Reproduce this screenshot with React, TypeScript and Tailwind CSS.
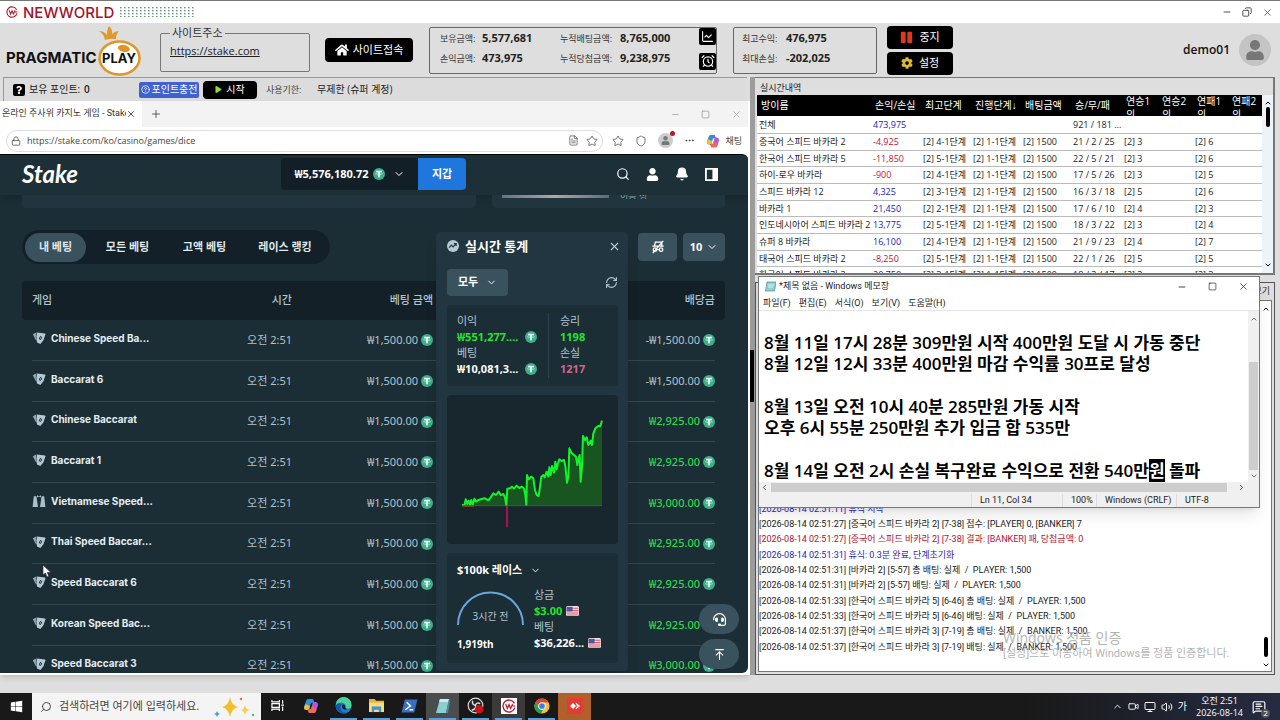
import type { ReactNode } from "react";
import {
  ArrowUpToLine, Bell, ChevronDown, ChevronUp, CircleHelp, Ellipsis, FileText, Lock,
  Minus, Plus, RefreshCw, Search, Shield, Square, Star, Volume2, X, Copy, AlarmClock,
  ChartLine, Monitor, MessageSquareText, Video,
} from "lucide-react";
import { FaHome, FaUser, FaCog, FaPlay, FaPause, FaWindows, FaQuestion, FaHeadset } from "react-icons/fa";

const APP = "font-['Open_Sans','Noto_Sans_CJK_KR',sans-serif]";
const SLIM = "font-['Roboto','Noto_Sans_CJK_KR',sans-serif]";
const KR = "font-['Noto_Sans','Noto_Sans_CJK_KR',sans-serif]";

const live = [
  ["전체", "473,975", "", "", "", "921 / 181 ...", "", ""],
  ["중국어 스피드 바카라 2", "-4,925", "4-1", "1-1", "1500", "21 / 2 / 25", "3", "6"],
  ["한국어 스피드 바카라 5", "-11,850", "5-1", "1-1", "1500", "22 / 5 / 21", "3", "6"],
  ["하이-로우 바카라", "-900", "4-1", "1-1", "1500", "17 / 5 / 26", "3", "5"],
  ["스피드 바카라 12", "4,325", "3-1", "1-1", "1500", "16 / 3 / 18", "5", "6"],
  ["바카라 1", "21,450", "2-1", "1-1", "1500", "17 / 6 / 10", "4", "3"],
  ["인도네시아어 스피드 바카라 2", "13,775", "5-1", "1-1", "1500", "18 / 3 / 22", "3", "4"],
  ["슈퍼 8 바카라", "16,100", "4-1", "1-1", "1500", "21 / 9 / 23", "4", "7"],
  ["태국어 스피드 바카라 2", "-8,250", "5-1", "1-1", "1500", "22 / 1 / 26", "5", "5"],
  ["한국어 스피드 바카라 3", "20,750", "3-1", "1-1", "1500", "18 / 3 / 17", "3", "3"],
];

const logs = [
  ["blue", "[2026-08-14 02:51:11] 휴식 시작"],
  ["", "[2026-08-14 02:51:27] [중국어 스피드 바카라 2] [7-38] 점수: [PLAYER] 0, [BANKER] 7"],
  ["red", "[2026-08-14 02:51:27] [중국어 스피드 바카라 2] [7-38] 결과: [BANKER] 패, 당첨금액: 0"],
  ["blue", "[2026-08-14 02:51:31] 휴식: 0.3분 완료, 단계초기화"],
  ["", "[2026-08-14 02:51:31] [바카라 2] [5-57] 총 배팅: 실제  /  PLAYER: 1,500"],
  ["", "[2026-08-14 02:51:31] [바카라 2] [5-57] 배팅: 실제  /  PLAYER: 1,500"],
  ["", "[2026-08-14 02:51:33] [한국어 스피드 바카라 5] [6-46] 총 배팅: 실제  /  PLAYER: 1,500"],
  ["", "[2026-08-14 02:51:33] [한국어 스피드 바카라 5] [6-46] 배팅: 실제  /  PLAYER: 1,500"],
  ["", "[2026-08-14 02:51:37] [한국어 스피드 바카라 3] [7-19] 총 배팅: 실제  /  BANKER: 1,500"],
  ["", "[2026-08-14 02:51:37] [한국어 스피드 바카라 3] [7-19] 배팅: 실제  /  BANKER: 1,500"],
];

const bets = [
  ["Chinese Speed Ba...", "-₩1,500.00"],
  ["Baccarat 6", "-₩1,500.00"],
  ["Chinese Baccarat", "₩2,925.00"],
  ["Baccarat 1", "₩2,925.00"],
  ["Vietnamese Speed...", "₩3,000.00"],
  ["Thai Speed Baccar...", "₩2,925.00"],
  ["Speed Baccarat 6", "₩2,925.00"],
  ["Korean Speed Bac...", "₩2,925.00"],
  ["Speed Baccarat 3", "₩3,000.00"],
];

const profitLine =
  "126,376 134,374 137,358 142,372 146,362 150,374 154,360 158,374 163,356 168,365 175,360 185,357 195,355 205,361 212,352 220,340 228,345 236,335 242,345 250,342 255,352 259,376 262,326 270,325 276,320 282,326 290,317 298,324 306,320 312,326 316,345 319,375 321,285 326,298 334,290 340,295 345,330 350,345 356,348 360,320 364,290 370,285 374,292 380,275 385,290 388,262 392,285 396,258 402,278 406,245 410,268 414,250 418,238 425,243 432,240 436,258 441,308 445,290 448,205 454,218 462,225 468,230 472,255 476,235 479,225 482,305 486,260 489,168 495,180 500,172 505,195 512,182 516,195 520,160 526,145 535,138 541,138 546,122";

function Tether() {
  return (
    <svg viewBox="0 0 24 24" className="size-3 shrink-0">
      <circle cx="12" cy="12" r="12" fill="#3fae8a" />
      <path d="M6 5.5h12v3.2h-4.3v10h-3.4v-10H6z" fill="#e9fff8" />
      <ellipse cx="12" cy="11.5" rx="7" ry="1.8" fill="none" stroke="#e9fff8" strokeWidth="0.9" />
    </svg>
  );
}

function UsFlag() {
  return (
    <svg viewBox="0 0 13 10" className="h-[10px] w-[13px] shrink-0">
      <rect width="13" height="10" rx="1.5" fill="#f1e4e6" />
      <path d="M.5 2.2h12M.5 4.6h12M.5 7h12M.8 9h11.4" stroke="#d8586c" strokeWidth="1.1" />
      <rect x=".6" y=".8" width="6" height="4.6" fill="#4a5a9c" />
    </svg>
  );
}

function Cards() {
  return (
    <svg viewBox="0 0 14 14" className="size-[14px] shrink-0">
      <path d="M.8 3.2 4.6 1.2 3.8 6 5 9.4 3.6 8.8z" fill="#8fa9b4" />
      <path d="M5.2 1.6 12.8 2.4q.7.1.6.8L11.6 9 8.4 13 5 11.6 4.4 5.6z" fill="#b4cad4" />
      <path d="M8.800 4.700 10.300 7 8 9.200 6.900 7z" fill="#1b2d35" />
      <circle cx="8.600" cy="7" r=".7" fill="#b4cad4" />
    </svg>
  );
}

function Vest() {
  return (
    <svg viewBox="0 0 14 14" className="size-[14px] shrink-0" fill="#a9c0ca">
      <path d="M1.8 2.2h2.6L6 13H.6zM9.6 2.2h2.6L13.4 13H8z" />
      <path d="m5 1.2 2 1 2-1v2.4l-2-1-2 1z" />
    </svg>
  );
}

function NwMark({ className }: { className: string }) {
  return (
    <svg viewBox="0 0 14 14" className={className} fill="none" stroke="#b3182f">
      <path d="M12.4 4.4A6 6 0 1 0 12.8 8.6" strokeWidth="1.3" />
      <path d="m3.6 5 1.8 4.4L7 5.6l1.6 3.8L10.6 5M10 7h3.4" strokeWidth="1.2" />
    </svg>
  );
}

function TitleBar() {
  return (
    <header className="flex h-[23px] shrink-0 items-center border-t border-[#777] bg-white pr-[7px] pl-[6px]">
      <NwMark className="size-3" />
      <span className="ml-[5px] font-['Inter',sans-serif] text-[15px] leading-none font-medium text-[#a3132c]">NEWWORLD</span>
      <svg viewBox="0 0 75 10" className="ml-[6px] h-[10px] w-[75px]">
        <defs>
          <pattern id="dots" width="4" height="3" patternUnits="userSpaceOnUse">
            <rect width="1.6" height="1.4" fill="#6c9a78" />
          </pattern>
        </defs>
        <rect width="75" height="10" fill="url(#dots)" />
      </svg>
      <div className="ml-auto flex items-center gap-[10px] text-[#333]">
        <button aria-label="최소화"><Minus size={10} strokeWidth={2} /></button>
        <button aria-label="이전 크기로"><Copy size={10} strokeWidth={2} className="-scale-x-100" /></button>
        <button aria-label="닫기"><X size={11} strokeWidth={1.5} /></button>
      </div>
    </header>
  );
}

function PragmaticLogo() {
  return (
    <svg viewBox="0 0 144 54" className="h-[54px] w-[144px] shrink-0" role="img" aria-label="Pragmatic Play">
      <path d="M105 17q-1-6-6-9 5 0 8 4 0-6 2-9 4 4 3 8 3-3 7-3-3 3-3 8-5-1-11 1z" fill="#e09a2b" />
      <ellipse cx="119.500" cy="35" rx="20" ry="16.500" fill="#fff" stroke="#e0952a" strokeWidth="2.500" />
      <ellipse cx="124" cy="25.500" rx="6" ry="3.500" fill="#e0952a" transform="rotate(12 124 25)" />
      <text x="6" y="40" className="font-['Inter',sans-serif] text-[15px] font-bold" fill="#111">PRAGMATIC</text>
      <text x="102" y="40" className="font-['Inter',sans-serif] text-[13px] font-bold" fill="#111">PLAY</text>
    </svg>
  );
}

function Stat({ label, value, labelClass }: { label: string; value: string; labelClass: string }) {
  return (
    <div className="flex h-5 items-center">
      <dt className={`text-[9px] text-[#333] ${labelClass}`}>{label}</dt>
      <dd className="text-[11px] font-bold text-[#222]">{value}</dd>
    </div>
  );
}

function BlackButton({ children, className, label }: { children: ReactNode; className: string; label?: string }) {
  return <button aria-label={label} className={`flex items-center justify-center rounded bg-black text-white ${className}`}>{children}</button>;
}

function Header() {
  return (
    <section className={`flex h-[54px] shrink-0 items-center bg-[#dedede] pr-[9px] ${APP}`}>
      <PragmaticLogo />
      <fieldset className="mb-[2px] ml-4 h-[46px] w-[150px] rounded-xs border border-[#777] px-[9px]">
        <legend className="px-0.5 text-[11px] leading-[14px] text-[#333]">사이트주소</legend>
        <a href="https://stake.com" className="block text-[11px] leading-[22px] text-[#222] underline">https://stake.com</a>
      </fieldset>
      <BlackButton className="ml-[15px] h-6 w-[88px] gap-1 text-[11px]"><FaHome size={14} />사이트접속</BlackButton>
      <dl className="ml-4 flex h-[47px] w-[288px] items-center rounded-xs border border-[#666] pb-[3px] pl-[10px]">
        <div className="w-[120px]">
          <Stat label="보유금액:" value="5,577,681" labelClass="w-[42px]" />
          <Stat label="손익금액:" value="473,975" labelClass="w-[42px]" />
        </div>
        <div className="flex-1">
          <Stat label="누적배팅금액:" value="8,765,000" labelClass="w-[60px]" />
          <Stat label="누적당첨금액:" value="9,238,975" labelClass="w-[60px]" />
        </div>
        <div className="flex flex-col gap-2">
          <BlackButton label="차트" className="size-[17px] !rounded-xs"><ChartLine size={13} /></BlackButton>
          <BlackButton label="알람" className="size-[17px] !rounded-xs"><AlarmClock size={14} /></BlackButton>
        </div>
      </dl>
      <dl className="ml-4 h-[47px] w-36 rounded-xs border border-[#666] py-[1px] pl-2">
        <Stat label="최고수익:" value="476,975" labelClass="w-[44px]" />
        <Stat label="최대손실:" value="-202,025" labelClass="w-[44px]" />
      </dl>
      <div className="ml-[10px] flex flex-col gap-[3px]">
        <BlackButton className="h-[23px] w-[66px] gap-[6px] text-[11px]"><FaPause size={13} color="#d83c1c" />중지</BlackButton>
        <BlackButton className="h-[23px] w-[66px] gap-[6px] text-[11px]"><FaCog size={12} color="#e0b92e" />설정</BlackButton>
      </div>
      <span className="ml-auto text-[12px] font-semibold text-[#111]">demo01</span>
      <span className="ml-[9px] flex size-8 items-center justify-center rounded-full bg-[#c4c4c4] text-[#777]"><FaUser size={20} /></span>
    </section>
  );
}

function PointBar() {
  return (
    <div className={`mr-[3px] ml-[3px] flex h-6 shrink-0 items-center border-t border-l border-[#999] bg-[#dcdcdc] pl-[9px] text-[10px] text-[#222] ${APP}`}>
      <span className="flex size-3 items-center justify-center rounded-xs bg-black text-white"><FaQuestion size={8} /></span>
      <span className="ml-1 w-[55px]">보유 포인트:</span>
      <b className="w-[55px] font-semibold">0</b>
      <button className="flex h-4 w-[60px] items-center justify-center gap-0.5 rounded-xs bg-[#3f62cf] text-white"><CircleHelp size={9} />포인트충전</button>
      <BlackButton className="ml-1 h-[18px] w-[54px] gap-1"><FaPlay size={7} color="#8be03c" />시작</BlackButton>
      <span className="ml-[9px] w-[51px] text-[9px] text-[#444]">사용기한:</span>
      <span>무제한 (슈퍼 계정)</span>
    </div>
  );
}

function BrowserChrome() {
  return (
    <>
      <div className={`flex h-[26px] shrink-0 items-center bg-[#f3f3f3] text-[#333] ${SLIM}`}>
        <div className="flex h-full w-[142px] items-center bg-white pl-[2px]">
          <span className="w-[124px] overflow-hidden text-[9px] whitespace-nowrap">온라인 주사위 카지노 게임 - Stake</span>
          <button aria-label="탭 닫기"><X size={10} /></button>
        </div>
        <button aria-label="새 탭" className="ml-2"><Plus size={12} strokeWidth={1.5} /></button>
        <div className="ml-auto flex gap-[21px] pr-[6px] text-[#999]">
          <button aria-label="최소화"><Minus size={9} /></button>
          <button aria-label="최대화"><Square size={9} /></button>
          <button aria-label="닫기"><X size={11} strokeWidth={1.5} /></button>
        </div>
      </div>
      <div className={`flex h-[27px] shrink-0 items-center bg-white pr-[6px] pl-[6px] text-[#444] ${APP}`}>
        <div className="flex h-[22px] min-w-0 flex-1 items-center rounded-full border border-[#ddd] px-[4px]">
          <Lock size={10} strokeWidth={1.8} />
          <input aria-label="주소" defaultValue="https://stake.com/ko/casino/games/dice" className="ml-[6px] min-w-0 flex-1 bg-transparent text-[9px] outline-none" />
          <FileText size={11} strokeWidth={1.5} />
          <Star size={12} strokeWidth={1.5} className="ml-[7px]" />
        </div>
        <div className="ml-[9px] flex items-center gap-[11px]">
          <Star size={12} strokeWidth={1.5} />
          <Shield size={12} strokeWidth={1.5} />
          <span className="relative flex size-[15px] items-center justify-center rounded-full bg-[#ccc] text-[#777]">
            <FaUser size={9} />
            <i className="absolute -top-0.5 -right-0.5 size-[5px] rounded-full bg-[#b3182f]" />
          </span>
          <Ellipsis size={11} />
          <button className="flex items-center gap-[5px] text-[9px]"><Copilot className="size-[14px]" />채팅</button>
        </div>
      </div>
    </>
  );
}

function Copilot({ className }: { className: string }) {
  return (
    <svg viewBox="0 0 16 16" className={className}>
      <path d="M5 1h5l1.500 3.500L8 5 6 12H3.500Q1 12 1 9l2-6q.6-2 2-2z" fill="#2f8fdc" />
      <path d="M2.500 6 1 9.500Q1 12 3.500 12H6l1-4z" fill="#e6c13b" />
      <path d="M11 15H6l-1.500-3.500L8 11l2-7h2.500Q15 4 15 7l-2 6q-.6 2-2 2z" fill="#b957d8" />
      <path d="M11 15H6l-1.500-3.500L8 11l1-3 4.600 3.500L13 13q-.6 2-2 2z" fill="#ee6a55" />
    </svg>
  );
}

function StakeHeader() {
  return (
    <div className="flex h-10 shrink-0 items-center bg-[#1d3038] pr-[30px] pb-[2px] pl-[22px] text-white shadow-md">
      <span className="w-[259px] font-['Lato',sans-serif] text-[24px] leading-none font-bold italic">Stake</span>
      <button className="flex h-8 w-[137px] items-center justify-center gap-1 rounded-l bg-[#131f26] text-[11px] font-bold">
        ₩5,576,180.72 <Tether /><ChevronDown size={12} className="ml-1" />
      </button>
      <button className="h-8 w-12 rounded-r bg-[#1f76dc] text-[11px] font-bold">지갑</button>
      <div className="ml-auto flex items-center gap-4">
        <button aria-label="검색"><Search size={14} /></button>
        <button aria-label="계정"><FaUser size={13} /></button>
        <button aria-label="알림"><Bell size={14} fill="white" /></button>
        <button aria-label="패널">
          <svg viewBox="0 0 14 14" className="size-[13px]"><path d="M1 1h12v12H1z" fill="none" stroke="white" strokeWidth="2" /><path d="M8 1h5v12H8z" fill="white" /></svg>
        </button>
      </div>
    </div>
  );
}

function BetTable() {
  return (
    <table className="mx-[10px] mt-[17px] w-[calc(100%-20px)] table-fixed border-separate border-spacing-0 text-[11px] text-[#b1c3cd]">
      <colgroup>
        <col className="w-[130px]" /><col className="w-[130px]" /><col className="w-[141px]" /><col />
      </colgroup>
      <thead>
        <tr className="h-[39px]">
          <th className="rounded-l bg-[#142027] text-left font-medium shadow-[-10px_0_0_#142027]">게임</th>
          <th className="bg-[#142027] text-right font-medium">시간</th>
          <th className="bg-[#142027] text-right font-medium">베팅 금액</th>
          <th className="rounded-r bg-[#142027] text-right font-medium shadow-[10px_0_0_#142027]">배당금</th>
        </tr>
      </thead>
      <tbody>
        {bets.map(([game, pay], i) => (
          <tr key={i} className="h-[41px] nth-[3n]:h-10 [&>td]:border-b [&>td]:border-[#33474f]">
            <td className="pb-1">
              <span className="flex items-center gap-[5px] font-['Inter',sans-serif] text-[10px] font-bold whitespace-nowrap text-[#e6eef2]">
                {i === 4 ? <Vest /> : <Cards />}{game}
              </span>
            </td>
            <td className="text-right">오전 2:51</td>
            <td><span className="flex items-center justify-end gap-[3px]">₩1,500.00 <Tether /></span></td>
            <td className={pay.startsWith("-") ? "" : "font-medium text-[#2fd84e]"}>
              <span className="flex items-center justify-end gap-[3px]">{pay} <Tether /></span>
            </td>
          </tr>
        ))}
      </tbody>
    </table>
  );
}

function LiveStats() {
  return (
    <aside className="absolute top-[37px] left-[436px] flex w-[192px] flex-col rounded bg-[#213640] pr-[10px] pb-2 pl-[11px] text-white shadow-lg">
      <div className="flex h-7 items-center">
        <svg viewBox="0 0 14 14" className="size-3">
          <circle cx="7" cy="7" r="7" fill="#b4cad4" />
          <path d="m2.500 9 2.500-3 2 2 3.500-3.500M8 4.300h2.700V7" fill="none" stroke="#213640" strokeWidth="1.400" />
        </svg>
        <h2 className="ml-[6px] text-[13px] leading-5 font-bold">실시간 통계</h2>
        <button aria-label="닫기" className="-mr-[3px] ml-auto text-[#b4cad4]"><X size={13} /></button>
      </div>
      <div className="mt-[9px] flex h-[27px] items-center justify-between">
        <button className="flex h-full w-[61px] items-center justify-center gap-2 rounded bg-[#3a525e] text-[11px] font-bold">모두<ChevronDown size={11} /></button>
        <button aria-label="새로 고침" className="text-[#b4cad4]"><RefreshCw size={13} /></button>
      </div>
      <div className="mt-[9px] flex h-[81px] rounded bg-[#1b2d35] py-2 pl-[10px] text-[11px] leading-4">
        <div className="w-[92px] border-r border-[#2c424d]">
          <p className="text-[#b1c3cd]">이익</p>
          <p className="flex items-center justify-between pr-[11px] font-bold text-[#24e52c]">₩551,277.... <Tether /></p>
          <p className="text-[#b1c3cd]">베팅</p>
          <p className="flex items-center justify-between pr-[11px] font-bold">₩10,081,3... <Tether /></p>
        </div>
        <div className="pl-[11px]">
          <p className="text-[#b1c3cd]">승리</p>
          <p className="font-bold text-[#24e52c]">1198</p>
          <p className="text-[#b1c3cd]">손실</p>
          <p className="font-bold text-[#d0668c]">1217</p>
        </div>
      </div>
      <svg viewBox="81 45 513 447" className="mt-[9px] h-[149px] w-full rounded bg-[#18272e]" preserveAspectRatio="none">
        <polygon points={`${profitLine} 546,377 126,377`} fill="#185520" />
        <polyline points={profitLine} fill="none" stroke="#12f52c" strokeWidth="6" strokeLinejoin="round" />
        <path d="M126 377h420" stroke="#4c6a55" strokeWidth="2" />
        <path d="M128 378h34" stroke="#b03a2c" strokeWidth="4" />
        <path d="M261 378v64" stroke="#c01450" strokeWidth="5" />
      </svg>
      <div className="mt-[9px] h-[110px] rounded bg-[#1b2d35] px-[10px] pt-[9px] text-[11px] leading-4">
        <button className="flex items-center gap-2 font-bold">$100k 레이스 <ChevronDown size={11} /></button>
        <div className="mt-[9px] flex">
          <div className="w-[77px]">
            <div className="relative h-[42px] w-[67px] text-center text-[10px] text-[#b1c3cd]">
              <svg viewBox="0 0 67 34" className="absolute inset-x-0 top-1 h-[34px]">
                <path d="M1 34a32.500 32.500 0 0 1 65 0" fill="none" stroke="#6ba6e0" strokeWidth="2" />
              </svg>
              <span className="absolute inset-x-0 top-[21px]">3시간 전</span>
            </div>
            <p className="mt-[7px] text-[10px] font-bold">1,919th</p>
          </div>
          <div>
            <p className="text-[#b1c3cd]">상금</p>
            <p className="flex items-center gap-1 font-bold text-[#24e52c]">$3.00 <UsFlag /></p>
            <p className="text-[#b1c3cd]">베팅</p>
            <p className="flex items-center gap-1 font-bold">$36,226... <UsFlag /></p>
          </div>
        </div>
      </div>
    </aside>
  );
}

function StakePage() {
  return (
    <div className={`flex min-h-0 flex-1 flex-col overflow-hidden rounded-tr-md rounded-br-md border-t border-black bg-[#1b2d35] ${KR}`}>
      <StakeHeader />
      <div className="relative min-h-0 flex-1 overflow-hidden pr-[23px] pl-[22px]">
        <div className="flex h-[13px] gap-4">
          <div className="w-[454px] rounded-b bg-[#20353e]" />
          <div className="flex flex-1 gap-[11px] overflow-hidden rounded-b bg-[#20353e] pl-[10px]">
            <span className="h-[3px] w-[107px] bg-linear-to-r from-[#60777f] via-[#b9a3a8] to-[#54707a]" />
            <span className="h-1 overflow-hidden text-[9px] leading-[2px] text-[#8ea3ad]">이름 정</span>
          </div>
        </div>
        <div className="mt-[22px] flex items-center">
          <div role="tablist" className="flex h-[34px] w-[308px] items-center rounded-full bg-[#142027] pl-[3px] text-[11px] font-bold text-[#dfe9ee]">
            <button role="tab" aria-selected="true" className="h-[29px] w-[61px] rounded-full bg-[#3a525e]">내 베팅</button>
            <button role="tab" className="w-[83px]">모든 베팅</button>
            <button role="tab" className="w-[71px]">고액 베팅</button>
            <button role="tab" className="flex-1">레이스 랭킹</button>
          </div>
          <div className="ml-auto flex gap-[6px] text-white">
            <button aria-label="익명 모드" className="flex h-7 w-[39px] items-center justify-center rounded bg-[#3a525e]">
              <svg viewBox="0 0 16 16" className="size-[14px]" fill="none" stroke="white" strokeWidth="1.500">
                <path d="M4 6.500 5 2.500h7l.5 4M1.500 7h13M14 1 2 15M6.500 11h3" />
                <circle cx="4.500" cy="11" r="2" /><circle cx="11.500" cy="11" r="2" />
              </svg>
            </button>
            <button className="flex h-7 w-[42px] items-center justify-center gap-1 rounded bg-[#3a525e] text-[11px] font-bold">10<ChevronDown size={12} /></button>
          </div>
        </div>
        <BetTable />
        <LiveStats />
        <div className="absolute right-[9px] bottom-1 flex flex-col gap-[5px] text-white">
          <button aria-label="고객 지원" className="flex h-[30px] w-10 items-center justify-center rounded-full bg-[#3a525e]"><FaHeadset size={13} /></button>
          <button aria-label="맨 위로" className="flex h-[30px] w-10 items-center justify-center rounded-full bg-[#3a525e]"><ArrowUpToLine size={13} /></button>
        </div>
        <svg viewBox="0 0 10 14" className="absolute top-[369px] left-[42px] h-[14px] w-[10px]">
          <path d="M1 1v10l2.300-2 1.800 4 1.800-.8L5.200 8.500H9z" fill="white" stroke="#222" strokeWidth=".6" />
        </svg>
      </div>
    </div>
  );
}

const liveHeads = ["방이름", "손익/손실", "최고단계", "진행단계", "배팅금액", "승/무/패", "연승1", "연승2", "연패1", "연패2"];

function LiveTable() {
  return (
    <section className={`flex h-[198px] shrink-0 flex-col border-t border-r-2 border-b-2 border-[#777] bg-[#dedede] ${APP}`}>
      <h2 className="h-[17px] shrink-0 pl-[5px] text-[9px] leading-[19px] text-[#222]">실시간내역</h2>
      <div className="ml-[2px] flex min-h-0 flex-1 bg-white">
        <div className="min-w-0 flex-1 overflow-hidden">
          <table className="w-full table-fixed border-collapse text-[9px] whitespace-nowrap text-[#222]">
            <colgroup>
              <col className="w-[114px]" /><col className="w-[50px]" /><col className="w-[50px]" /><col className="w-[50px]" /><col className="w-[50px]" />
              <col className="w-[51px]" /><col className="w-9" /><col className="w-[35px]" /><col className="w-[35px]" /><col />
            </colgroup>
            <thead className="bg-black text-white">
              <tr className="h-[21px]">
                {liveHeads.map((h, i) => (
                  <th key={h} className="p-0 pl-1 text-left font-normal">
                    <div className="h-[21px] overflow-hidden text-[10px] leading-[21px]">
                      {i > 5 ? <span className="block leading-[13px]">{h}<br />의</span> : h}
                      {i === 3 && <span className="font-['Liberation_Sans',sans-serif]">↓</span>}
                    </div>
                  </th>
                ))}
              </tr>
            </thead>
            <tbody>
              {live.map((r, i) => (
                <tr key={i} className="h-[17px] border-b border-[#bbb] nth-[3n]:h-4 [&>td]:p-0 [&>td]:pl-[2px] [&>td]:leading-[15px]">
                  <td>{r[0]}</td>
                  <td className={r[1].startsWith("-") ? "text-[#c41236]" : "text-[#2218b8]"}>{r[1]}</td>
                  <td>{r[2] && `[2] ${r[2]}단계`}</td>
                  <td>{r[3] && `[2] ${r[3]}단계`}</td>
                  <td>{r[4] && `[2] ${r[4]}`}</td>
                  <td>{r[5]}</td>
                  <td>{r[6] && `[2] ${r[6]}`}</td>
                  <td />
                  <td>{r[7] && `[2] ${r[7]}`}</td>
                  <td />
                </tr>
              ))}
            </tbody>
          </table>
        </div>
        <div className="flex w-[11px] flex-col items-center bg-[#eef3fa] pt-1">
          <ChevronUp size={8} strokeWidth={3} />
          <i className="h-5 w-1 rounded bg-black" />
          <ChevronDown size={8} strokeWidth={3} className="mt-auto mb-1" />
        </div>
      </div>
    </section>
  );
}

function LogPanel() {
  return (
    <section className={`relative mt-[7px] flex min-h-0 flex-1 flex-col border border-[#555] bg-[#dedede] ${SLIM}`}>
      <div className="flex h-[17px] shrink-0 items-center justify-end pr-1 text-[9px] text-[#333]"><button>보기</button></div>
      <div className="mx-[2px] mb-[2px] flex min-h-0 flex-1 border border-[#777] bg-white">
        <div className="flex min-w-0 flex-1 flex-col justify-end overflow-hidden pb-4 text-[9px] whitespace-pre">
          {logs.map(([tone, line], i) => (
            <p key={i} className={`h-[15px] shrink-0 leading-[15px] nth-[3n]:h-4 ${tone === "blue" ? "text-[#2b1fb0]" : tone === "red" ? "text-[#b31230]" : "text-[#222]"}`}>{line}</p>
          ))}
        </div>
        <div className="flex w-[11px] flex-col items-center pt-1">
          <ChevronUp size={8} strokeWidth={3} />
          <i className="mt-auto h-5 w-1 rounded bg-black" />
          <ChevronDown size={8} strokeWidth={3} className="mt-1 mb-0.5" />
        </div>
      </div>
      <div className={`absolute bottom-[12px] left-[247px] whitespace-nowrap text-[#b4b4b4] ${APP}`}>
        <p className="text-[14px] leading-4">Windows 정품 인증</p>
        <p className={`text-[11px] leading-4 ${SLIM}`}>[설정]으로 이동하여 Windows를 정품 인증합니다.</p>
      </div>
    </section>
  );
}

function Notepad() {
  return (
    <section className={`absolute top-[199px] left-[3px] flex h-[232px] w-[502px] flex-col border border-[#777] bg-white text-[#222] shadow-lg ${SLIM}`}>
      <div className="flex h-[19px] shrink-0 items-center pr-[10px] pl-[6px] text-[9px]">
        <svg viewBox="0 0 11 11" className="size-[11px]"><path d="M2 1h9L9.500 10H.5z" fill="#8ed0cf" stroke="#4d8c8c" strokeWidth=".7" /><path d="M3 4h6M3 6h5" stroke="#e8ffff" strokeWidth=".8" /></svg>
        <span className="ml-[3px]">*제목 없음 - Windows 메모장</span>
        <div className="ml-auto flex gap-[21px]">
          <button aria-label="최소화"><Minus size={10} /></button>
          <button aria-label="최대화"><Square size={9} strokeWidth={1.8} /></button>
          <button aria-label="닫기"><X size={11} strokeWidth={1.6} /></button>
        </div>
      </div>
      <nav className="flex h-[15px] shrink-0 items-center gap-2 border-b border-[#e4e4e4] pl-1 text-[9px] leading-none">
        <button>파일(F)</button><button>편집(E)</button><button>서식(O)</button><button>보기(V)</button><button>도움말(H)</button>
      </nav>
      <div className="flex min-h-0 flex-1">
        <div role="textbox" aria-multiline="true" aria-label="메모" tabIndex={0} className={`min-w-0 flex-1 overflow-hidden pl-[5px] text-[17px] leading-[21px] font-semibold whitespace-pre text-black [&>p]:h-[21px] [&>p]:nth-[3n]:h-[22px] ${APP}`}>
          <p>&nbsp;</p>
          <p>8월 11일 17시 28분 309만원 시작 400만원 도달 시 가동 중단</p>
          <p>8월 12일 12시 33분 400만원 마감 수익률 30프로 달성</p>
          <p>&nbsp;</p>
          <p>8월 13일 오전 10시 40분 285만원 가동 시작</p>
          <p>오후 6시 55분 250만원 추가 입금 합 535만</p>
          <p>&nbsp;</p>
          <p>8월 14일 오전 2시 손실 복구완료 수익으로 전환 540만<mark className="bg-black text-white">원</mark> 돌파</p>
        </div>
        <div className="flex w-[11px] flex-col items-center bg-[#f0f0f0]">
          <ChevronUp size={8} className="mt-1" />
          <i className="mt-auto h-[108px] w-[9px] bg-[#cdcdcd]" />
          <ChevronDown size={8} className="my-0.5" />
        </div>
      </div>
      <div className="flex h-[11px] shrink-0 items-center bg-[#f0f0f0] pr-[13px] pl-[1px]">
        <ChevronDown size={9} className="rotate-90" />
        <i className="ml-[2px] h-[9px] w-[456px] bg-[#cdcdcd]" />
        <ChevronDown size={9} className="ml-auto -rotate-90" />
      </div>
      <div className="flex h-[14px] shrink-0 items-center justify-end bg-[#f0f0f0] text-[9px] leading-[13px] [&>span]:border-l [&>span]:border-[#ddd] [&>span]:pl-2">
        <span className="w-[91px]">Ln 11, Col 34</span>
        <span className="w-[34px]">100%</span>
        <span className="w-[80px]">Windows (CRLF)</span>
        <span className="w-[83px]">UTF-8</span>
      </div>
    </section>
  );
}

function Task({ children, label, open = true, tint = "" }: { children: ReactNode; label: string; open?: boolean; tint?: string }) {
  return (
    <button aria-label={label} className={`flex h-full w-[33px] flex-col items-center ${tint}`}>
      <span className="flex flex-1 items-center">{children}</span>
      <i className={`h-0.5 w-[27px] ${open ? "bg-[#5a9fd8]" : "bg-transparent"}`} />
    </button>
  );
}

function Taskbar() {
  return (
    <footer className={`flex h-[27px] shrink-0 items-center bg-linear-to-r from-[#191919] from-80% to-[#262b42] pr-[14px] text-white ${APP}`}>
      <button aria-label="시작" className="flex w-8 justify-center"><FaWindows size={13} /></button>
      <label className="flex h-full w-[229px] items-center bg-[#f4f4f4] pr-[6px] pl-2 text-[#333]">
        <Search size={12} strokeWidth={1.8} className="-scale-x-100" />
        <input aria-label="검색" placeholder="검색하려면 여기에 입력하세요." className="ml-[7px] min-w-0 flex-1 bg-transparent text-[11px] outline-none placeholder:text-[#444]" />
        <svg viewBox="0 0 42 22" className="h-[22px] w-[42px]">
          <path d="M17 1q1.500 8.500 8 10-6.500 1.500-8 10-1.500-8.500-8-10 6.500-1.500 8-10z" fill="#f2bf2c" />
          <path d="M32 9q.8 4 4 5-3.200 1-4 5-.8-4-4-5 3.200-1 4-5z" fill="#f5cf4e" />
          <path d="M4 15q.5 2.500 3 3-2.500.5-3 3-.5-2.500-3-3 2.500-.5 3-3z" fill="#3aa6dd" />
          <circle cx="28" cy="3" r="1.300" fill="#d77b46" /><circle cx="40" cy="19" r="1.200" fill="#58b06a" />
        </svg>
      </label>
      <Task label="작업 보기" open={false}>
        <svg viewBox="0 0 14 14" className="size-[13px]" fill="none" stroke="white" strokeWidth="1.300"><path d="M1 1v2h8V1M1 13v-2h8v2M1 5h8v4H1zM12.500 1v4M12.500 8v5M11 6.500h3" /></svg>
      </Task>
      <Task label="Copilot" open={false}><Copilot className="size-4" /></Task>
      <Task label="Edge">
        <svg viewBox="0 0 18 18" className="size-[17px]">
          <circle cx="9" cy="9" r="8.500" fill="#1a7fd0" />
          <path d="M1 7A8.300 8.300 0 0 1 17.500 8.500q0 4-4.200 4-3 0-2.300-2Q12 7 8 6 3.500 5.500 1 9z" fill="#4cd39a" />
          <path d="M7 8q-3 4 1 7.500 3 2 6.500 0Q11 19 6 17-.5 13 1.500 8 4 5 7 8z" fill="#1558a8" />
          <path d="M8 8q3-.5 3 2-1 2.500 2.500 2.500-1 1-3 .8Q6.500 12.500 8 8z" fill="#191919" />
        </svg>
      </Task>
      <Task label="파일 탐색기">
        <svg viewBox="0 0 18 16" className="h-[15px] w-[17px]"><path d="M1 1h6l1.500 2H17v12H1z" fill="#e9b53b" /><path d="M1 5h16v10H1z" fill="#fbdc7c" /><path d="M4 15V9h10v6h-2.500v-2.500h-5V15z" fill="#3b95dc" /></svg>
      </Task>
      <Task label="PowerShell">
        <svg viewBox="0 0 18 15" className="h-[14px] w-[17px]"><path d="M4 .5h13.500L14 14.500H.5z" fill="#3c6fc4" /><path d="m6 3.500 4 4-5.500 4M9 11.500h4" fill="none" stroke="white" strokeWidth="1.500" /></svg>
      </Task>
      <Task label="메모장" tint="bg-[#4a4d4e]">
        <svg viewBox="0 0 16 16" className="size-4"><path d="M5 1h9l-3 14H1z" fill="#8ccfd3" /><path d="M5 1h9l-.7 3H4z" fill="#cdeef0" /><path d="m11 15 3-14 1 2-2 12z" fill="#4b8f95" /></svg>
      </Task>
      <Task label="OBS">
        <svg viewBox="0 0 18 18" className="size-[17px]"><circle cx="9" cy="9" r="7.800" fill="#222" stroke="#ddd" strokeWidth="1.200" /><path d="M9 9q-4-1-3-5M9 9q1-4 5-2M9 9q1 4-4 5" stroke="#ddd" strokeWidth="1.600" fill="none" /><circle cx="13" cy="13" r="4.500" fill="#cc1418" /></svg>
      </Task>
      <Task label="NewWorld" tint="bg-[#3a3a3a]"><span className="flex size-4 items-center justify-center bg-white"><NwMark className="size-[14px]" /></span></Task>
      <Task label="Chrome">
        <svg viewBox="0 0 18 18" className="size-4"><circle cx="9" cy="9" r="8.500" fill="#f3c32f" /><path d="M9 .5A8.500 8.500 0 0 1 16.500 5H9a4 4 0 0 0-3.600 5.500L1.700 4.700A8.500 8.500 0 0 1 9 .5z" fill="#dc4437" /><path d="M1.700 4.700 5.500 11A4 4 0 0 0 10 13l-2 4.500A8.500 8.500 0 0 1 1.700 4.700z" fill="#2f9e50" /><circle cx="9" cy="9" r="4.200" fill="white" /><circle cx="9" cy="9" r="3.200" fill="#3b7ded" /></svg>
      </Task>
      <Task label="AnyDesk" open={false} tint="bg-[#b0602a]">
        <svg viewBox="0 0 16 16" className="size-4"><rect width="16" height="16" fill="#e23c34" /><path d="m6 5 3 3-3 3-3-3z" fill="white" /><path d="m9 5 3.500 3L9 11l1.500-3z" fill="white" stroke="white" strokeWidth=".8" /></svg>
      </Task>
      <div className="ml-auto flex items-center gap-[5px] text-[11px]">
        <ChevronUp size={11} /><Video size={11} /><Monitor size={12} /><Volume2 size={12} />
        <span className="text-[10px]">가</span>
        <time className="ml-1 text-center text-[9px] leading-[12px]">오전 2:51<br />2026-08-14</time>
        <span className="relative ml-1">
          <MessageSquareText size={14} />
          <i className="absolute -right-1 -bottom-1 flex size-[9px] items-center justify-center rounded-full bg-[#555] text-[8px] leading-none not-italic">2</i>
        </span>
      </div>
    </footer>
  );
}

export default function App() {
  return (
    <div className="flex h-screen min-h-0 flex-col overflow-hidden bg-[#dedede]">
      <TitleBar />
      <Header />
      <main className="grid min-h-0 flex-1 grid-cols-[750fr_5px_525fr]">
        <div className="flex min-h-0 min-w-0 flex-col pb-[18px]">
          <PointBar />
          <div className="flex min-h-0 flex-1 flex-col border-r-2 border-b-2 border-white bg-white shadow-md">
            <BrowserChrome />
            <StakePage />
          </div>
        </div>
        <div className="mb-[18px] flex items-center bg-[#9c9c9c]"><i className="h-[52px] w-1 bg-black" /></div>
        <div className="relative flex min-h-0 min-w-0 flex-col pr-[5px] pb-[18px]">
          <LiveTable />
          <LogPanel />
          <Notepad />
        </div>
      </main>
      <Taskbar />
    </div>
  );
}
